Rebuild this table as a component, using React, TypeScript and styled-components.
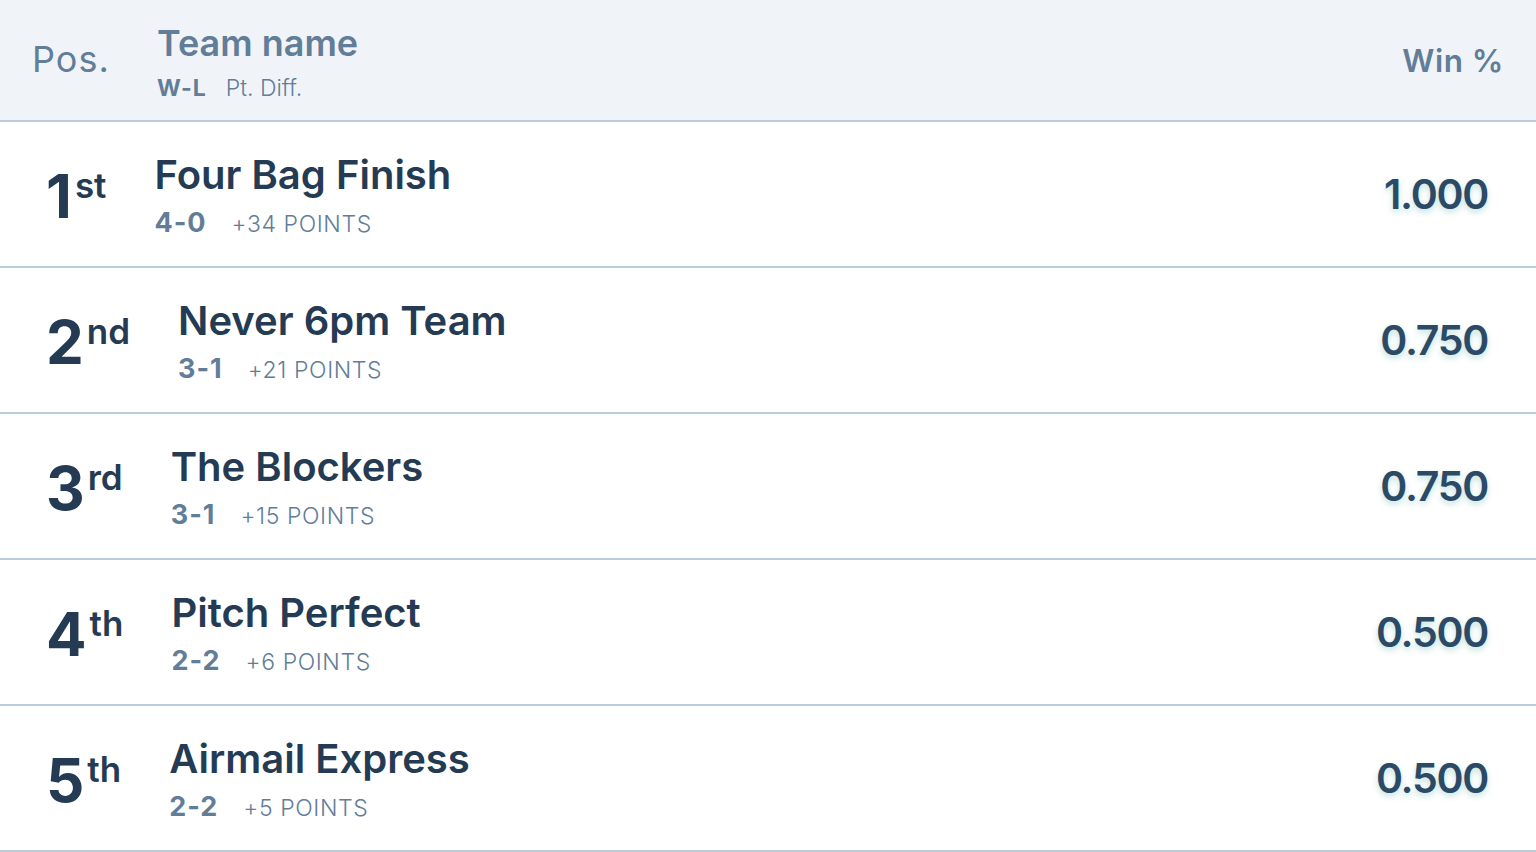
import React from "react";
import styled, { createGlobalStyle } from "styled-components";

const Global = createGlobalStyle`
  html, body { margin: 0; padding: 0; background: #ffffff; }
  body { font-family: Inter, "Noto Sans", sans-serif; -webkit-font-smoothing: antialiased; }
`;

const Table = styled.div`
  width: 1536px;
  display: flex;
  flex-direction: column;
`;

const Header = styled.div`
  height: 120px;
  background: #f0f4f8;
  border-bottom: 2px solid #bcccdc;
  display: flex;
  align-items: center;
  padding: 0 32px 0 32px;
  color: #627d98;
`;

const HeadPos = styled.div`
  font-size: 36px;
  font-weight: 400;
  letter-spacing: 1px;
  width: 125px;
  margin-top: -2px;
`;

const HeadName = styled.div`
  display: flex;
  flex-direction: column;
  flex: 1;
  margin-top: 8px;
`;

const HeadTitle = styled.div`
  font-size: 36px;
  font-weight: 600;
  line-height: 40px;
  margin-top: -2px;
`;

const HeadSub = styled.div`
  display: flex;
  gap: 19px;
  font-size: 23px;
  line-height: 30px;
  margin-top: 10px;
`;

const HeadWL = styled.span`
  font-weight: 700;
  letter-spacing: 1px;
`;

const HeadDiff = styled.span`
  font-weight: 300;
`;

const HeadWin = styled.div`
  font-size: 31.5px;
  font-weight: 600;
  letter-spacing: 0.5px;
`;

const Row = styled.div`
  height: 144px;
  border-bottom: 2px solid #bcccdc;
  display: flex;
  align-items: center;
  padding: 0 48px 0 46px;
`;

const Pos = styled.div`
  display: flex;
  align-items: flex-start;
  color: #243b53;
  margin-right: 48px;
  margin-top: 4px;
`;

const PosNum = styled.span`
  font-size: 60px;
  font-weight: 700;
  line-height: 44px;
`;

const PosSup = styled.span`
  font-size: 35px;
  font-weight: 600;
  line-height: 28px;
  margin-left: 3px;
  margin-top: -3px;
`;

const NameBlock = styled.div`
  display: flex;
  flex-direction: column;
  flex: 1;
  margin-top: 10px;
`;

const TeamName = styled.div`
  font-size: 40px;
  font-weight: 600;
  color: #243b53;
  line-height: 44px;
  margin-top: -6px;
`;

const Stats = styled.div`
  display: flex;
  align-items: baseline;
  gap: 25px;
  color: #627d98;
  margin-top: 9px;
`;

const Record = styled.span`
  font-size: 27px;
  font-weight: 700;
  letter-spacing: 1px;
`;

const Points = styled.span`
  font-size: 23px;
  font-weight: 300;
  letter-spacing: 0.6px;
`;

const Win = styled.div`
  font-size: 41px;
  font-weight: 600;
  letter-spacing: -1.3px;
  color: #2c4a66;
  text-shadow: 0 3px 6px rgba(72, 170, 160, 0.35);
`;

const teams = [
  { n: "1", s: "st", name: "Four Bag Finish", wl: "4-0", pts: "+34 POINTS", win: "1.000" },
  { n: "2", s: "nd", name: "Never 6pm Team", wl: "3-1", pts: "+21 POINTS", win: "0.750" },
  { n: "3", s: "rd", name: "The Blockers", wl: "3-1", pts: "+15 POINTS", win: "0.750" },
  { n: "4", s: "th", name: "Pitch Perfect", wl: "2-2", pts: "+6 POINTS", win: "0.500" },
  { n: "5", s: "th", name: "Airmail Express", wl: "2-2", pts: "+5 POINTS", win: "0.500" },
];

export default function App() {
  return (
    <>
      <Global />
      <Table>
        <Header>
          <HeadPos>Pos.</HeadPos>
          <HeadName>
            <HeadTitle>Team name</HeadTitle>
            <HeadSub>
              <HeadWL>W-L</HeadWL>
              <HeadDiff>Pt. Diff.</HeadDiff>
            </HeadSub>
          </HeadName>
          <HeadWin>Win %</HeadWin>
        </Header>
        {teams.map((t) => (
          <Row key={t.n}>
            <Pos>
              <PosNum>{t.n}</PosNum>
              <PosSup>{t.s}</PosSup>
            </Pos>
            <NameBlock>
              <TeamName>{t.name}</TeamName>
              <Stats>
                <Record>{t.wl}</Record>
                <Points>{t.pts}</Points>
              </Stats>
            </NameBlock>
            <Win>{t.win}</Win>
          </Row>
        ))}
      </Table>
    </>
  );
}
